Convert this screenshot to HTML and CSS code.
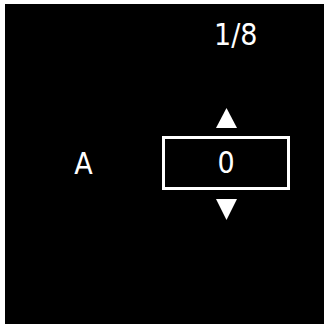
FILE: index.html
```html
<html>
<head>
<link rel="stylesheet" href="styles.css">
</head>
<body>
  <div class="panel">
    <div class="counter">1/8</div>

    <div class="row">
      <div class="label">A</div>
      <div class="stepper">
        <svg class="arrow up" width="21" height="20" viewBox="0 0 21 20"><polygon points="10.5,0 21,20 0,20" fill="#fff"/></svg>
        <div class="valuebox">0</div>
        <svg class="arrow down" width="21" height="21" viewBox="0 0 21 21"><polygon points="0,0 21,0 10.5,21" fill="#fff"/></svg>
      </div>
    </div>
  </div>
</body>
</html>
```

FILE: styles.css
```css
body
{
  background-color:#FFFFFF;
  margin:4px 0 3px 5px;
  padding:0;
}

.panel
{
  width:319px;
  height:320px;
  background-color:#000000;
  color:#FFFFFF;
  font-family:"Liberation Sans Narrow", "DejaVu Sans Condensed", "Liberation Sans", sans-serif;
  font-size:30px;
  display:flex;
  flex-direction:column;
  padding-top:16px;
  box-sizing:border-box;
}

.counter
{
  height:30px;
  line-height:30px;
  padding-left:209px;
}

.row
{
  display:grid;
  grid-template-columns:157px 128px;
  align-items:center;
  margin-top:58px;
}

.label
{
  text-align:center;
  line-height:30px;
}

.stepper
{
  display:flex;
  flex-direction:column;
  align-items:center;
}

.arrow
{
  display:block;
}

.up
{
  margin-bottom:8px;
}

.down
{
  margin-top:9px;
}

.valuebox
{
  width:128px;
  height:54px;
  box-sizing:border-box;
  border:3px solid #FFFFFF;
  display:flex;
  align-items:center;
  justify-content:center;
  line-height:30px;
}
```
